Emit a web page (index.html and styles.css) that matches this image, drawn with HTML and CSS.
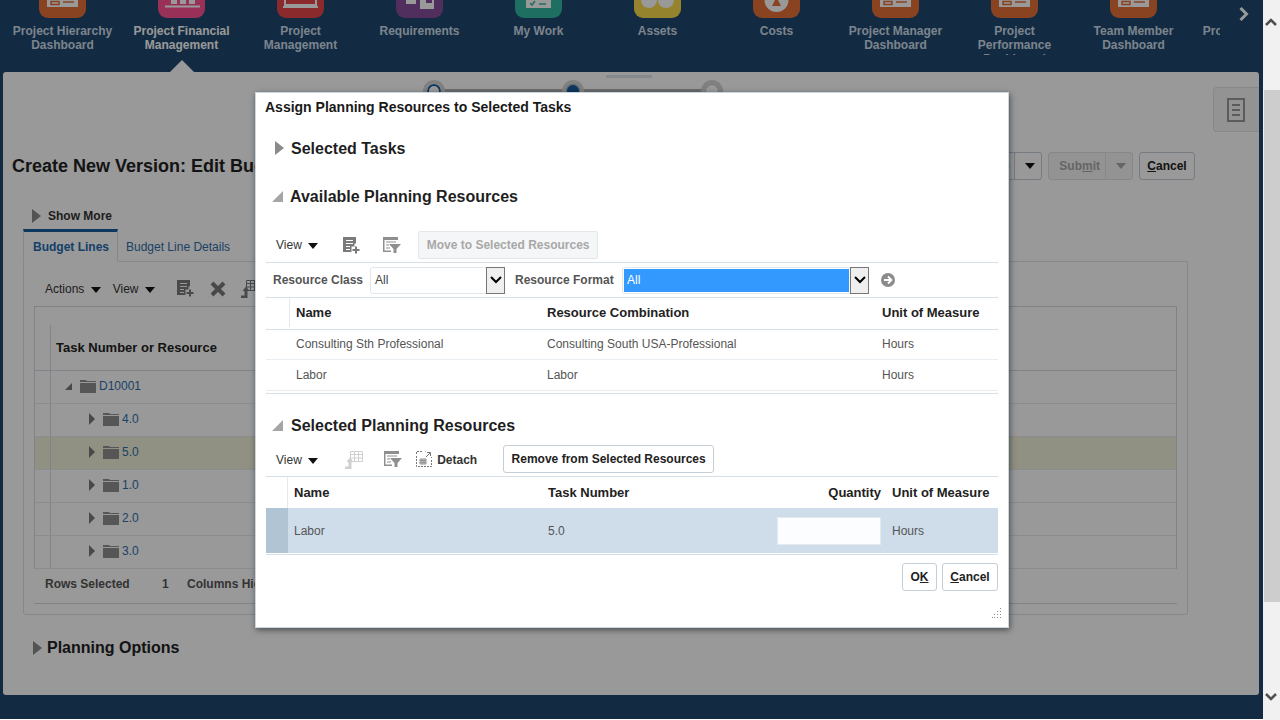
FILE: index.html
```html
<!DOCTYPE html>
<html lang="en">
<head>
  <meta charset="UTF-8">
  <title>Assign Planning Resources</title>
  <link rel="stylesheet" href="styles.css">
</head>
<body>
  <svg class="sprite" width="0" height="0">
    <symbol id="i-new" viewBox="0 0 18 18">
      <path d="M0 0h13v6.500h-1.500v3h-3V15H0z" fill="currentColor"/>
      <path d="M3 3.500h7M3 6.500h7M3 9.500h4M3 12.500h4" stroke="#fff" stroke-width="1.200"/>
      <path d="M13 9.500v7M9.500 13h7" stroke="currentColor" stroke-width="2"/>
    </symbol>
    <symbol id="i-filter" viewBox="0 0 18 16">
      <path d="M0 0h15v3H0zM0 3h1.500v12H0zM0 13.500h8V15H0z" fill="currentColor"/>
      <path d="M3 5h10M3 8h3M3 11h4" stroke="currentColor"/>
      <path d="M6 7h12l-4.500 5v4h-3v-4z" fill="currentColor"/>
    </symbol>
    <symbol id="i-freeze" viewBox="0 0 18 18">
      <path d="M5.500.5h12v10h-12zM5.500 3.500h12M5.500 7h12M9.500.5v10M13.500.5v10" fill="none" stroke="currentColor"/>
      <path d="M0 15.500h3.500V11H1.500L5 6.500 8.500 11h-2v7H0z" fill="currentColor"/>
    </symbol>
    <symbol id="i-detach" viewBox="0 0 16 16">
      <path d="M.5 3v-2.500H7M9 .5h.5M.5 5v10.500H15.500V9M15.500 7V6" fill="none" stroke="currentColor" stroke-dasharray="2 1"/>
      <path d="M4 8h6v5H4zM4 9.700h6M4 11.300h6M6 8v5M8 8v5" fill="none" stroke="currentColor" stroke-width=".8"/>
      <path d="M10 6l4-4M11 1.500h3.500V5" fill="none" stroke="currentColor"/>
    </symbol>
    <symbol id="i-folder" viewBox="0 0 16 14">
      <path d="M0 2V1h6l1 1h9v1H0zM0 4h16v10H0z" fill="currentColor"/>
    </symbol>
  </svg>

  <div class="app">
    <nav class="springboard">
      <div class="strip">
        <div class="tile">
          <div class="tile-icon orange"><svg width="47" height="18"><path d="M8 0h31v7H8z" fill="#fff"/><path d="M12 1.500h8v3h-8zM24 2h11" fill="none" stroke="#e67038" stroke-width="1.500"/></svg></div>
          <div class="tile-label">Project Hierarchy Dashboard</div>
        </div>
        <div class="tile selected">
          <div class="tile-icon magenta"><svg width="47" height="18"><path d="M7 5.500h35v2H7zM13 0h6v4h-6zM22 0h6v4h-6zM31 0h6v4h-6z" fill="#fff"/></svg></div>
          <div class="tile-label">Project Financial Management</div>
        </div>
        <div class="tile">
          <div class="tile-icon red"><svg width="47" height="18"><path d="M8 0v5h31V0" fill="none" stroke="#fff" stroke-width="2"/><path d="M6 6h35v2H6z" fill="#fff"/></svg></div>
          <div class="tile-label">Project Management</div>
        </div>
        <div class="tile">
          <div class="tile-icon purple"><svg width="47" height="18"><path d="M10 0h10v4h-10zM24 0h6v3h6v-3h2v9H24z" fill="#fff"/></svg></div>
          <div class="tile-label">Requirements</div>
        </div>
        <div class="tile">
          <div class="tile-icon green"><svg width="47" height="18"><path d="M11 0h25v8H11z" fill="#fff"/><path d="M15 3l2 2 3-4M24 4h7" fill="none" stroke="#33b8a3" stroke-width="1.500"/></svg></div>
          <div class="tile-label">My Work</div>
        </div>
        <div class="tile">
          <div class="tile-icon yellow"><svg width="47" height="18"><circle cx="15" cy="0" r="8" fill="#fff"/><circle cx="32" cy="0" r="8" fill="#fff"/></svg></div>
          <div class="tile-label">Assets</div>
        </div>
        <div class="tile">
          <div class="tile-icon orange"><svg width="47" height="18"><circle cx="23.500" cy="0" r="12" fill="#fff"/><path d="M19 6l3-6h3l3 6z" fill="#e67038"/></svg></div>
          <div class="tile-label">Costs</div>
        </div>
        <div class="tile">
          <div class="tile-icon orange"><svg width="47" height="18"><path d="M8 0h31v7H8z" fill="#fff"/><path d="M12 1.500h8v3h-8zM24 2h11" fill="none" stroke="#e67038" stroke-width="1.500"/></svg></div>
          <div class="tile-label">Project Manager Dashboard</div>
        </div>
        <div class="tile">
          <div class="tile-icon orange"><svg width="47" height="18"><path d="M8 0h31v7H8z" fill="#fff"/><path d="M12 1.500h8v3h-8zM24 2h11" fill="none" stroke="#e67038" stroke-width="1.500"/></svg></div>
          <div class="tile-label">Project Performance Dashboard</div>
        </div>
        <div class="tile">
          <div class="tile-icon orange"><svg width="47" height="18"><path d="M8 0h31v7H8z" fill="#fff"/><path d="M12 1.500h8v3h-8zM24 2h11" fill="none" stroke="#e67038" stroke-width="1.500"/></svg></div>
          <div class="tile-label">Team Member Dashboard</div>
        </div>
        <div class="tile">
          <div class="tile-icon orange"></div>
          <div class="tile-label">Project Hierarchy</div>
        </div>
      </div>
      <svg class="next" width="12" height="16" viewBox="0 0 12 16"><path d="M2.500 2l6 6-6 6" fill="none" stroke="#fff" stroke-width="3"/></svg>
    </nav>

    <main class="panel">
      <div class="notch"></div>
      <div class="top-area">
        <div class="handle"></div>
        <div class="train">
          <span class="stop visited"></span>
          <span class="stop current"></span>
          <span class="stop"></span>
        </div>
      </div>
      <div class="drawer-tab">
        <svg width="18" height="24"><path d="M1 1h16v22H1z" fill="none" stroke="#9a9a9a" stroke-width="2"/><path d="M5 7h8M5 12h8M5 17h8" stroke="#9a9a9a" stroke-width="2"/></svg>
      </div>

      <div class="title-row">
        <h1>Create New Version: Edit Budget</h1>
        <div class="title-actions">
          <div class="split"><span class="split-text">Save</span><span class="split-arrow"><i class="caret"></i></span></div>
          <div class="split disabled"><span class="split-text">Sub<u>m</u>it</span><span class="split-arrow"><i class="caret"></i></span></div>
          <button class="btn btn-cancel"><u>C</u>ancel</button>
        </div>
      </div>

      <div class="show-more"><i class="tri-right"></i>Show More</div>

      <div class="tabs">
        <div class="tab active">Budget Lines</div>
        <div class="tab">Budget Line Details</div>
      </div>
      <div class="tab-box">
        <div class="bg-toolbar">
          <span class="menu">Actions <i class="caret"></i></span>
          <span class="menu">View <i class="caret"></i></span>
          <svg class="tool" width="18" height="18"><use href="#i-new"/></svg>
          <svg class="tool" width="16" height="16" viewBox="0 0 16 16"><path d="M2 2l12 12M14 2L2 14" stroke="currentColor" stroke-width="4"/></svg>
          <svg class="tool" width="18" height="18"><use href="#i-freeze"/></svg>
        </div>
        <div class="bg-table">
          <div class="bg-head"><div class="bg-head-cell">Task Number or Resource</div></div>
          <div class="bg-row"><div class="row-hdr"></div><div class="tree lvl0"><i class="tri-open small"></i><svg class="folder" width="16" height="14"><use href="#i-folder"/></svg><a>D10001</a></div></div>
          <div class="bg-row"><div class="row-hdr"></div><div class="tree"><i class="tri-right small"></i><svg class="folder" width="16" height="14"><use href="#i-folder"/></svg><a>4.0</a></div></div>
          <div class="bg-row current"><div class="row-hdr"></div><div class="tree"><i class="tri-right small"></i><svg class="folder" width="16" height="14"><use href="#i-folder"/></svg><a>5.0</a></div></div>
          <div class="bg-row"><div class="row-hdr"></div><div class="tree"><i class="tri-right small"></i><svg class="folder" width="16" height="14"><use href="#i-folder"/></svg><a>1.0</a></div></div>
          <div class="bg-row"><div class="row-hdr"></div><div class="tree"><i class="tri-right small"></i><svg class="folder" width="16" height="14"><use href="#i-folder"/></svg><a>2.0</a></div></div>
          <div class="bg-row"><div class="row-hdr"></div><div class="tree"><i class="tri-right small"></i><svg class="folder" width="16" height="14"><use href="#i-folder"/></svg><a>3.0</a></div></div>
        </div>
        <div class="status-bar"><span class="status-name">Rows Selected</span><span class="status-val">1</span><span>Columns Hidden</span></div>
      </div>

      <div class="planning"><i class="tri-right"></i>Planning Options</div>
    </main>

    <div class="glass"></div>

    <section class="dialog">
      <div class="dialog-title">Assign Planning Resources to Selected Tasks</div>

      <h2 class="sec sec-tasks"><i class="tri-right"></i>Selected Tasks</h2>
      <h2 class="sec sec-avail"><i class="tri-open"></i>Available Planning Resources</h2>

      <div class="toolbar toolbar-avail">
        <span class="menu">View <i class="caret"></i></span>
        <svg class="tool first" width="18" height="18"><use href="#i-new"/></svg>
        <svg class="tool light" width="18" height="16"><use href="#i-filter"/></svg>
        <button class="btn-disabled">Move to Selected Resources</button>
      </div>

      <div class="filter-row">
        <label>Resource Class</label>
        <div class="select"><span class="select-val">All</span><span class="select-btn"><svg width="12" height="8"><path d="M1 1l5 5 5-5" fill="none" stroke="#000" stroke-width="2"/></svg></span></div>
        <label class="second">Resource Format</label>
        <div class="select wide"><span class="select-val picked">All</span><span class="select-btn"><svg width="12" height="8"><path d="M1 1l5 5 5-5" fill="none" stroke="#000" stroke-width="2"/></svg></span></div>
        <svg class="go" width="14" height="14" viewBox="0 0 14 14"><circle cx="7" cy="7" r="7" fill="#8b8b8b"/><path d="M3 7h7M7 3.500L10.500 7 7 10.500" fill="none" stroke="#fff" stroke-width="1.800"/></svg>
      </div>

      <div class="avail-table">
        <div class="avail-row head"><div></div><div class="cell">Name</div><div class="cell">Resource Combination</div><div class="cell">Unit of Measure</div></div>
        <div class="avail-row first-row"><div></div><div class="cell">Consulting Sth Professional</div><div class="cell">Consulting South USA-Professional</div><div class="cell">Hours</div></div>
        <div class="avail-row last-row"><div></div><div class="cell">Labor</div><div class="cell">Labor</div><div class="cell">Hours</div></div>
      </div>

      <h2 class="sec sec-selected"><i class="tri-open"></i>Selected Planning Resources</h2>

      <div class="toolbar toolbar-sel">
        <span class="menu">View <i class="caret"></i></span>
        <svg class="tool faded" width="18" height="18"><use href="#i-freeze"/></svg>
        <svg class="tool light" width="18" height="16"><use href="#i-filter"/></svg>
        <svg class="tool detach" width="16" height="16"><use href="#i-detach"/></svg>
        <span class="detach-label">Detach</span>
        <button class="btn remove">Remove from Selected Resources</button>
      </div>

      <div class="sel-table">
        <div class="sel-row head"><div></div><div class="cell">Name</div><div class="cell">Task Number</div><div class="cell num">Quantity</div><div class="cell">Unit of Measure</div></div>
        <div class="sel-row picked-row"><div class="row-mark"></div><div class="cell">Labor</div><div class="cell">5.0</div><div class="cell num"><input class="qty" type="text"></div><div class="cell">Hours</div></div>
      </div>

      <div class="dialog-actions">
        <button class="btn btn-ok">O<u>K</u></button>
        <button class="btn btn-cancel"><u>C</u>ancel</button>
      </div>

      <svg class="grip" width="10" height="10" viewBox="0 0 10 10"><path d="M8 0h1v1H8zM8 3h1v1H8zM5 3h1v1H5zM8 6h1v1H8zM5 6h1v1H5zM2 6h1v1H2zM8 9h1v1H8zM5 9h1v1H5zM2 9h1v1H2zM0 9h1v1H0z" fill="#8a8a8a"/></svg>
    </section>
  </div>

  <aside class="scrollbar">
    <svg class="arrow-up" width="12" height="8"><path d="M1 7l5-5 5 5" fill="none" stroke="#505050" stroke-width="2.500"/></svg>
    <div class="thumb"></div>
    <svg class="arrow-down" width="12" height="8"><path d="M1 1l5 5 5-5" fill="none" stroke="#505050" stroke-width="2.500"/></svg>
  </aside>
</body>
</html>
```

FILE: styles.css
```css
html, body {
  margin: 0;
  height: 720px;
  overflow: hidden;
}
body {
  display: flex;
  font-family: "Liberation Sans", Arial, sans-serif;
  font-size: 12px;
  color: #333;
  background: #fff;
}
.sprite {
  position: absolute;
}
h1, h2 {
  margin: 0;
}
button {
  font-family: inherit;
}

/* page behind the dialog */
.app {
  position: relative;
  width: 1263px;
  height: 719px;
  background: #1e496e;
  overflow: hidden;
}
.springboard {
  display: flex;
  height: 72px;
}
.strip {
  display: flex;
  width: 1217px;
  margin-left: 3px;
  height: 55px;
  overflow: hidden;
}
.tile {
  flex: 0 0 119px;
  width: 119px;
  height: 55px;
  overflow: hidden;
  display: flex;
  flex-direction: column;
  align-items: center;
  color: #cfdcea;
  font-weight: bold;
  line-height: 14px;
  text-align: center;
}
.tile.selected {
  color: #fff;
}
.tile-icon {
  flex: none;
  width: 47px;
  height: 18px;
  border-radius: 0 0 9px 9px;
  overflow: hidden;
}
.tile-icon svg {
  display: block;
}
.tile-label {
  margin-top: 6px;
  width: 112px;
}
.orange { background: #e67038; }
.magenta { background: #fd5093; }
.red { background: #e6464a; }
.purple { background: #864f9e; }
.green { background: #33b8a3; }
.yellow { background: #fada4b; }
.next {
  margin: 6px 0 0 18px;
}

.panel {
  position: relative;
  box-sizing: border-box;
  width: 1256px;
  height: 623px;
  margin-left: 3px;
  background: #fff;
  border-radius: 3px;
}
.notch {
  position: absolute;
  left: 167px;
  top: -12px;
  width: 0;
  height: 0;
  border-left: 12px solid transparent;
  border-right: 12px solid transparent;
  border-bottom: 12px solid #fff;
}
.top-area {
  height: 80px;
  padding-top: 3px;
  box-sizing: border-box;
}
.handle {
  width: 46px;
  height: 3px;
  margin-left: 603px;
  background: #dfe5ea;
}
.train {
  display: flex;
  justify-content: space-between;
  width: 300px;
  height: 22px;
  margin: 2px 0 0 420px;
  background: linear-gradient(#b5b5b5, #b5b5b5) center / 100% 5px no-repeat;
}
.stop {
  box-sizing: border-box;
  width: 22px;
  height: 22px;
  border: 4px solid #d6d6d6;
  border-radius: 50%;
  background: #fff;
  box-shadow: inset 0 0 0 1px #c0c0c0;
}
.stop.visited {
  box-shadow: inset 0 0 0 2px #145c9e;
}
.stop.current {
  background: #145c9e;
}
.drawer-tab {
  position: absolute;
  right: 0;
  top: 15px;
  box-sizing: border-box;
  display: flex;
  align-items: center;
  justify-content: center;
  width: 46px;
  height: 45px;
  padding-right: 2px;
  background: #f6f6f6;
  border: 1px solid #e3e3e3;
  border-right: 0;
  border-radius: 4px 0 0 4px;
}
.title-row {
  display: flex;
  align-items: center;
  justify-content: space-between;
  height: 28px;
  padding: 0 64px 0 9px;
}
.title-row h1 {
  font-size: 18px;
  color: #222;
}
.title-actions {
  display: flex;
  gap: 6px;
}
.split {
  display: flex;
  height: 28px;
  box-sizing: border-box;
  border: 1px solid #c4ced7;
  border-radius: 3px;
  font-weight: bold;
}
.split-text {
  padding: 0 5px 0 10px;
  line-height: 26px;
  border-right: 1px solid #c4ced7;
}
.split-arrow {
  width: 26px;
  display: flex;
  align-items: center;
  justify-content: center;
}
.split.disabled {
  background: #f5f6f7;
  border-color: #dde3e8;
  color: #a8a8a8;
}
.split.disabled .split-text {
  border-color: #dde3e8;
}
.split.disabled .caret {
  border-top-color: #a8a8a8;
}
.caret {
  display: inline-block;
  width: 0;
  height: 0;
  margin-left: 3px;
  vertical-align: 0;
  border-left: 5px solid transparent;
  border-right: 5px solid transparent;
  border-top: 6px solid #111;
}
.btn {
  box-sizing: border-box;
  height: 28px;
  padding: 0 8px;
  background: #fff;
  border: 1px solid #c4ced7;
  border-radius: 3px;
  font-size: 12px;
  font-weight: bold;
  color: #222;
}
.btn-cancel {
  width: 56px;
  padding: 0;
}
.btn-ok {
  width: 35px;
  padding: 0;
}
.tri-right {
  display: inline-block;
  flex: none;
  width: 0;
  height: 0;
  border-top: 7px solid transparent;
  border-bottom: 7px solid transparent;
  border-left: 9px solid #8a8a8a;
}
.tri-open {
  display: inline-block;
  flex: none;
  width: 0;
  height: 0;
  border-left: 11px solid transparent;
  border-bottom: 11px solid #a5a5a5;
}
.tri-right.small {
  border-top-width: 6px;
  border-bottom-width: 6px;
  border-left-width: 6px;
  border-left-color: #7a7a7a;
}
.tri-open.small {
  border-left-width: 7px;
  border-bottom-width: 7px;
  border-bottom-color: #7a7a7a;
}
.show-more {
  display: flex;
  align-items: center;
  gap: 7px;
  height: 16px;
  margin-top: 28px;
  padding-left: 29px;
  font-weight: bold;
  color: #333;
}
.tabs {
  display: flex;
  height: 33px;
  margin: 5px 0 -1px 20px;
  box-sizing: border-box;
  position: relative;
}
.tab {
  padding: 0 8px;
  line-height: 36px;
  color: #2f6ea8;
}
.tab.active {
  box-sizing: border-box;
  width: 95px;
  padding-left: 9px;
  line-height: 30px;
  font-weight: bold;
  color: #1f6bb0;
  border-top: 3px solid #145c9e;
  border-right: 1px solid #dbe3ea;
  border-left: 1px solid #dbe3ea;
  border-bottom: 1px solid #fff;
  background: #fff;
}
.tab-box {
  box-sizing: border-box;
  width: 1165px;
  height: 354px;
  margin-left: 20px;
  padding: 0 10px;
  border: 1px solid #dbe3ea;
  border-radius: 0 0 3px 3px;
}
.bg-toolbar {
  display: flex;
  align-items: center;
  height: 44px;
  padding: 10px 0 0 11px;
  box-sizing: border-box;
}
.menu {
  color: #333;
  margin-right: 12px;
  white-space: nowrap;
}
.tool {
  flex: none;
  color: #7a7a7a;
  margin-right: 15px;
}
.bg-toolbar .tool:first-of-type {
  margin-left: 10px;
}
.bg-table {
  box-sizing: border-box;
  height: 263px;
  border: 1px solid #d4dde5;
}
.bg-head {
  display: flex;
  align-items: flex-end;
  height: 64px;
  border-bottom: 1px solid #d4dde5;
  box-sizing: border-box;
}
.bg-head-cell {
  height: 45px;
  margin-left: 15px;
  padding-left: 5px;
  line-height: 46px;
  border-left: 1px solid #d4dde5;
  font-size: 13px;
  font-weight: bold;
  color: #222;
  flex: 1;
}
.bg-row {
  display: flex;
  box-sizing: border-box;
  height: 33px;
  border-bottom: 1px solid #e6ebef;
}
.bg-row.current {
  background: #f2f2da;
}
.row-hdr {
  box-sizing: border-box;
  width: 16px;
  border-right: 1px solid #d4dde5;
}
.tree {
  display: flex;
  align-items: center;
  padding: 0 0 2px 38px;
}
.tree.lvl0 {
  padding-left: 14px;
}
.tree .folder {
  margin: 0 3px 0 8px;
  color: #8f8f8f;
}
.tree a {
  color: #2f6ea8;
}
.status-bar {
  display: flex;
  box-sizing: border-box;
  height: 35px;
  padding: 8px 0 0 11px;
  border-bottom: 1px solid #d4dde5;
  font-weight: bold;
  color: #555;
}
.status-name {
  width: 117px;
}
.status-val {
  width: 25px;
}
.planning {
  display: flex;
  align-items: center;
  gap: 5px;
  height: 16px;
  margin: 25px 0 0 30px;
  font-size: 16px;
  font-weight: bold;
  color: #222;
}

.glass {
  position: absolute;
  inset: 0;
  background: rgba(0, 0, 0, 0.4);
}

/* dialog */
.dialog {
  position: absolute;
  left: 255px;
  top: 92px;
  box-sizing: border-box;
  width: 754px;
  height: 536px;
  padding: 0 10px;
  background: #fff;
  border: 1px solid #c8d6e2;
  box-shadow: 1px 2px 6px rgba(0, 0, 0, 0.5);
}
.dialog-title {
  height: 28px;
  margin-left: -1px;
  line-height: 28px;
  font-size: 14px;
  font-weight: bold;
  color: #1a1a1a;
}
.sec {
  display: flex;
  align-items: center;
  box-sizing: border-box;
  height: 24px;
  padding-top: 2px;
  font-size: 16px;
  color: #1f1f1f;
}
.sec i {
  margin-top: -2px;
}
.sec-tasks {
  margin-top: 15px;
  padding-left: 9px;
  gap: 7px;
}
.sec-avail {
  margin-top: 24px;
  padding-left: 6px;
  gap: 7px;
}
.sec-selected {
  margin-top: 19px;
  padding-left: 6px;
  gap: 8px;
}
.toolbar {
  display: flex;
  box-sizing: border-box;
  align-items: flex-start;
  border-bottom: 1px solid #d6dfe6;
}
.toolbar-avail {
  height: 32px;
  margin-top: 23px;
  padding-left: 10px;
}
.toolbar-avail .menu {
  margin-top: 7px;
  margin-right: 25px;
}
.toolbar-avail .tool {
  margin-top: 6px;
  margin-right: 22px;
}
.toolbar-avail .tool.light {
  margin-top: 6px;
  margin-right: 17px;
}
.tool.light {
  color: #8f8f8f;
}
.tool.faded {
  color: #d0d0d0;
}
.btn-disabled {
  box-sizing: border-box;
  width: 180px;
  height: 28px;
  padding: 0;
  background: #f5f6f7;
  border: 1px solid #e3e7ea;
  border-radius: 2px;
  font-size: 12px;
  font-weight: bold;
  color: #a8a8a8;
}
.filter-row {
  display: flex;
  align-items: center;
  box-sizing: border-box;
  height: 35px;
  padding-left: 7px;
  border-bottom: 1px solid #d6dfe6;
  font-weight: bold;
  color: #555;
}
.filter-row label {
  width: 97px;
}
.filter-row label.second {
  width: 107px;
  margin-left: 10px;
}
.select {
  display: flex;
  box-sizing: border-box;
  width: 135px;
  height: 27px;
  font-weight: normal;
  border: 1px solid #dfe6ec;
  border-radius: 3px;
}
.select.wide {
  width: 247px;
}
.select-val {
  flex: 1;
  padding-left: 3px;
  margin: 1px;
  line-height: 23px;
  color: #444;
}
.select-val.picked {
  background: #3399ff;
  color: #fff;
}
.select-btn {
  box-sizing: border-box;
  display: flex;
  align-items: center;
  justify-content: center;
  width: 19px;
  margin: -1px -1px -1px 0;
  background: #efefef;
  border: 1px solid #767676;
}
.go {
  margin-left: 12px;
}
.avail-table {
  padding-bottom: 2px;
  border-bottom: 1px solid #d6dfe6;
}
.avail-row {
  display: grid;
  grid-template-columns: 24px 251px 335px 1fr;
  box-sizing: border-box;
  align-items: center;
  color: #555;
}
.avail-row .cell {
  padding-left: 6px;
}
.avail-row.head {
  height: 32px;
  padding-bottom: 2px;
  border-bottom: 1px solid #d6dfe6;
  font-size: 13px;
  font-weight: bold;
  color: #222;
}
.avail-row.head > div:first-child {
  height: 100%;
  border-right: 1px solid #e3e9ee;
}
.avail-row.first-row {
  height: 30px;
  padding-bottom: 2px;
  border-bottom: 1px solid #e8edf1;
}
.avail-row.last-row {
  height: 31px;
  border-bottom: 1px solid #e8edf1;
}
.toolbar-sel {
  height: 32px;
  margin-top: 8px;
  padding-left: 10px;
}
.toolbar-sel .menu {
  margin-top: 8px;
  margin-right: 27px;
}
.toolbar-sel .tool {
  margin-top: 6px;
  margin-right: 21px;
}
.toolbar-sel .tool.light {
  margin-top: 6px;
  margin-right: 14px;
}
.toolbar-sel .tool.detach {
  margin-top: 6px;
  margin-right: 5px;
  color: #777;
}
.detach-label {
  margin-top: 8px;
  font-weight: bold;
  color: #333;
}
.btn.remove {
  margin-left: 26px;
  width: 211px;
  padding: 0;
}
.sel-row {
  display: grid;
  grid-template-columns: 22px 254px 230px 114px 1fr;
  align-items: center;
  color: #555;
}
.sel-row .cell {
  padding-left: 6px;
}
.sel-row .cell.num {
  padding: 0 5px 0 0;
  text-align: right;
}
.sel-row.head {
  height: 31px;
  font-size: 13px;
  font-weight: bold;
  color: #222;
}
.sel-row.head > div:first-child {
  height: 100%;
  border-right: 1px solid #e3e9ee;
  box-sizing: border-box;
}
.sel-row.picked-row {
  height: 45px;
  background: #cfdcea;
}
.row-mark {
  height: 100%;
  background: #b0c4d4;
}
.sel-table {
  padding-bottom: 1px;
  border-bottom: 1px solid #d6dfe6;
}
.qty {
  display: block;
  box-sizing: border-box;
  width: 104px;
  height: 28px;
  margin-left: 5px;
  background: #fcfdfe;
  border: 1px solid #e3e9ef;
}
.dialog-actions {
  display: flex;
  justify-content: flex-end;
  gap: 5px;
  margin-top: 8px;
}
.grip {
  position: absolute;
  right: 6px;
  bottom: 9px;
}

.scrollbar {
  position: relative;
  width: 17px;
  height: 720px;
  background: #f1f1f1;
}
.thumb {
  width: 16px;
  height: 512px;
  margin: 90px 0 0 1px;
  background: #cdcdcd;
}
.arrow-up {
  position: absolute;
  left: 2px;
  top: 18px;
}
.arrow-down {
  position: absolute;
  left: 2px;
  top: 693px;
}
```
